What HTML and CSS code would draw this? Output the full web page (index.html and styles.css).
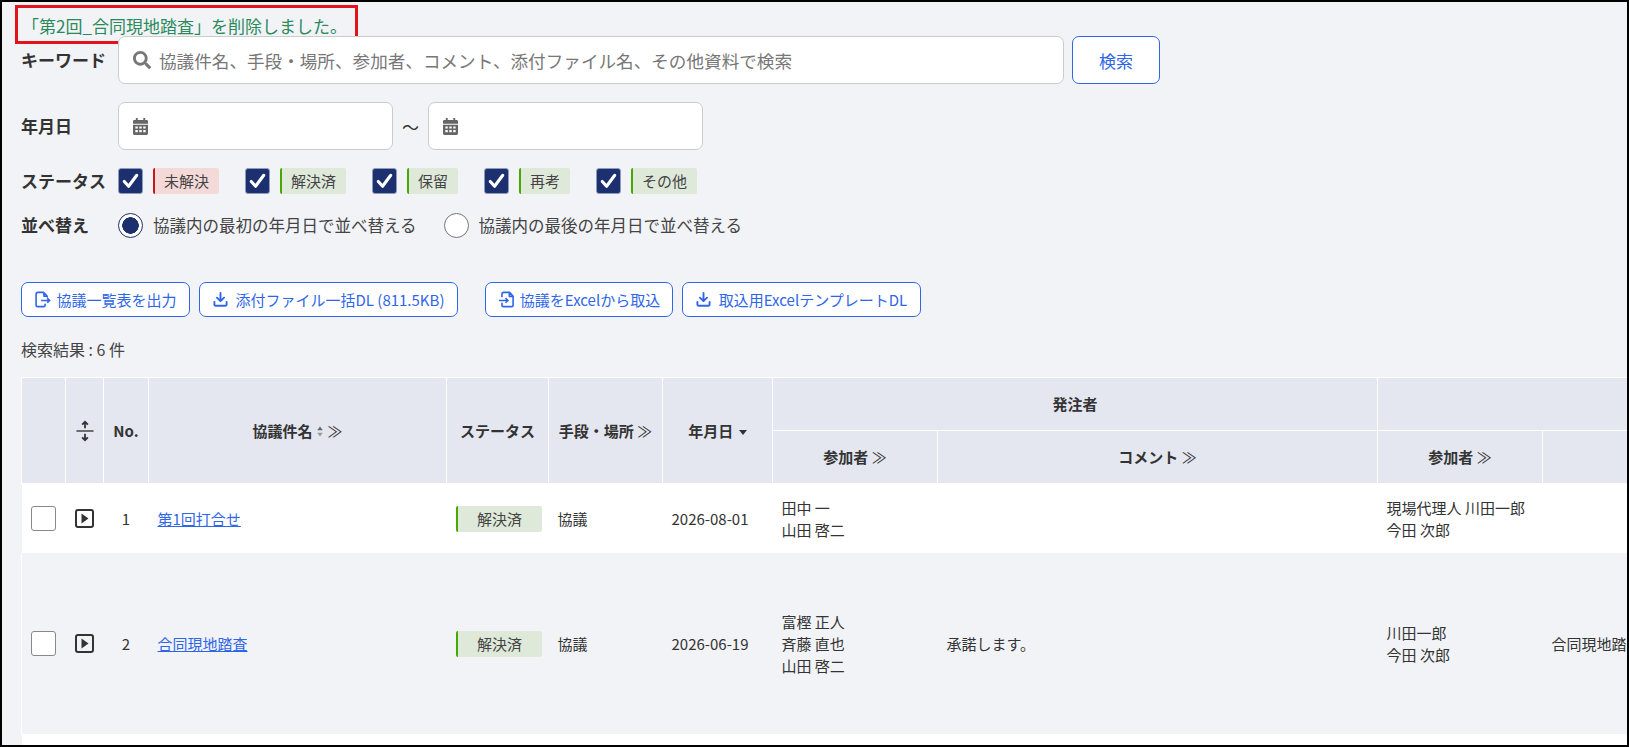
FILE: index.html
```html
<!DOCTYPE html>
<html lang="ja">
<head>
<meta charset="utf-8">
<title>協議一覧</title>
<link rel="stylesheet" href="styles.css">
</head>
<body>
<svg class="defs" width="0" height="0" aria-hidden="true">
  <symbol id="i-search" viewBox="0 0 512 512"><path d="M505 442.7L405.3 343c-4.5-4.5-10.6-7-17-7H372c27.6-35.3 44-79.7 44-128C416 93.1 322.9 0 208 0S0 93.1 0 208s93.1 208 208 208c48.3 0 92.7-16.4 128-44v16.3c0 6.4 2.5 12.5 7 17l99.7 99.7c9.4 9.4 24.6 9.4 33.9 0l28.3-28.3c9.4-9.4 9.4-24.6.1-34zM208 336c-70.7 0-128-57.2-128-128 0-70.7 57.2-128 128-128 70.7 0 128 57.2 128 128 0 70.7-57.2 128-128 128z" fill="currentColor"/></symbol>
  <symbol id="i-cal" viewBox="0 0 16 18"><path fill="currentColor" fill-rule="evenodd" d="M3 0h2v2h6V0h2v2h1.500A1.500 1.500 0 0 1 16 3.500V6H0V3.500A1.500 1.500 0 0 1 1.500 2H3zM0 7h16v9.500a1.500 1.500 0 0 1-1.500 1.500h-13A1.500 1.500 0 0 1 0 16.500zM2.500 9v2.200h2.600V9zm4.200 0v2.200h2.600V9zm4.200 0v2.200h2.600V9zM2.500 12.800V15h2.600v-2.200zm4.200 0V15h2.600v-2.200zm4.200 0V15h2.600v-2.200z"/></symbol>
  <symbol id="i-check" viewBox="0 0 24 24"><path d="M5.500 12.500l4.500 5L18.500 6" fill="none" stroke="#fff" stroke-width="3.200" stroke-linecap="round" stroke-linejoin="round"/></symbol>
  <symbol id="i-export" viewBox="0 0 18 18"><path d="M10.500 1.500H4a1.800 1.800 0 0 0-1.800 1.800v11.400A1.800 1.800 0 0 0 4 16.500h6a1.800 1.800 0 0 0 1.800-1.800v-1.200M10.500 1.500v4h3.500M10.500 1.500l3.500 4v1.500" fill="none" stroke="currentColor" stroke-width="1.700" stroke-linejoin="round"/><path d="M7.500 10h9M14 7.500l2.500 2.500-2.500 2.500" fill="none" stroke="currentColor" stroke-width="1.700"/></symbol>
  <symbol id="i-import" viewBox="0 0 18 18"><path d="M8 1.500h4.500l3.500 4v9.200a1.800 1.800 0 0 1-1.800 1.800H6a1.800 1.800 0 0 1-1.800-1.800v-2.200M4.200 6.500V3.300A1.800 1.800 0 0 1 6 1.500h2M12 1.500v4.200h4" fill="none" stroke="currentColor" stroke-width="1.700" stroke-linejoin="round"/><path d="M1 10h9.500M8 7.500l2.500 2.500L8 12.500" fill="none" stroke="currentColor" stroke-width="1.700"/></symbol>
  <symbol id="i-dl" viewBox="0 0 16 16"><path d="M8 1v8.500M4.200 6L8 9.800 11.800 6" fill="none" stroke="currentColor" stroke-width="2" stroke-linecap="round" stroke-linejoin="round"/><path d="M1.500 10.500v3a1.200 1.200 0 0 0 1.200 1.200h10.600a1.200 1.200 0 0 0 1.200-1.200v-3" fill="none" stroke="currentColor" stroke-width="2" stroke-linecap="round"/></symbol>
  <symbol id="i-expand" viewBox="0 0 20 24"><path d="M0.500 12h19" stroke="currentColor" stroke-width="1.500"/><path d="M10 9V2M6.800 5L10 1.800 13.200 5M10 15v7M6.800 19l3.200 3.200 3.200-3.200" fill="none" stroke="currentColor" stroke-width="2"/></symbol>
  <symbol id="i-play" viewBox="0 0 19 19"><rect x="1" y="1" width="17" height="17" rx="2" fill="none" stroke="currentColor" stroke-width="2"/><path d="M6.500 4.500l7 5-7 5z" fill="currentColor"/></symbol>
  <symbol id="i-sort" viewBox="0 0 8 14"><path d="M4 0.500L7.500 5.500h-7z" fill="#666"/><path d="M4 13.500L.5 8.500h7z" fill="#999"/></symbol>
  <symbol id="i-down" viewBox="0 0 10 6"><path d="M0 0h10L5 6z" fill="currentColor"/></symbol>
</svg>

<div class="frame">
  <div class="annotation"></div>
  <p class="message">「第2回_合同現地踏査」を削除しました。</p>

  <div class="row row-keyword">
    <span class="label">キーワード</span>
    <div class="field field-keyword">
      <svg class="ic-search"><use href="#i-search"/></svg>
      <span class="placeholder">協議件名、手段・場所、参加者、コメント、添付ファイル名、その他資料で検索</span>
    </div>
    <button class="btn-search">検索</button>
  </div>

  <div class="row row-date">
    <span class="label">年月日</span>
    <div class="field field-date"><svg class="ic-cal"><use href="#i-cal"/></svg></div>
    <span class="tilde">～</span>
    <div class="field field-date field-date2"><svg class="ic-cal"><use href="#i-cal"/></svg></div>
  </div>

  <div class="row row-status">
    <span class="label">ステータス</span>
    <div class="statuses">
      <span class="status"><span class="cb"><svg><use href="#i-check"/></svg></span><span class="tag tag-red">未解決</span></span>
      <span class="status"><span class="cb"><svg><use href="#i-check"/></svg></span><span class="tag">解決済</span></span>
      <span class="status"><span class="cb"><svg><use href="#i-check"/></svg></span><span class="tag">保留</span></span>
      <span class="status"><span class="cb"><svg><use href="#i-check"/></svg></span><span class="tag">再考</span></span>
      <span class="status"><span class="cb"><svg><use href="#i-check"/></svg></span><span class="tag">その他</span></span>
    </div>
  </div>

  <div class="row row-sort">
    <span class="label">並べ替え</span>
    <span class="radio radio-on"></span><span class="radio-label">協議内の最初の年月日で並べ替える</span>
    <span class="radio"></span><span class="radio-label">協議内の最後の年月日で並べ替える</span>
  </div>

  <div class="toolbar">
    <button class="btn btn-1"><svg class="ic-btn"><use href="#i-export"/></svg>協議一覧表を出力</button>
    <button class="btn btn-2"><svg class="ic-btn"><use href="#i-dl"/></svg>添付ファイル一括DL (811.5KB)</button>
    <button class="btn btn-3"><svg class="ic-btn"><use href="#i-import"/></svg>協議をExcelから取込</button>
    <button class="btn btn-4"><svg class="ic-btn"><use href="#i-dl"/></svg>取込用ExcelテンプレートDL</button>
  </div>

  <p class="result">検索結果 : 6 件</p>

  <table class="grid">
    <colgroup>
      <col class="c1"><col class="c2"><col class="c3"><col class="c4"><col class="c5"><col class="c6"><col class="c7"><col class="c8"><col class="c9"><col class="c10"><col class="c11">
    </colgroup>
    <thead>
      <tr>
        <th rowspan="2"></th>
        <th rowspan="2"><svg class="ic-expand"><use href="#i-expand"/></svg></th>
        <th rowspan="2">No.</th>
        <th rowspan="2">協議件名 <svg class="ic-sort"><use href="#i-sort"/></svg> <span class="more">≫</span></th>
        <th rowspan="2">ステータス</th>
        <th rowspan="2">手段・場所 <span class="more">≫</span></th>
        <th rowspan="2">年月日 <svg class="ic-down"><use href="#i-down"/></svg></th>
        <th colspan="2">発注者</th>
        <th colspan="2"></th>
      </tr>
      <tr>
        <th>参加者 <span class="more">≫</span></th>
        <th>コメント <span class="more">≫</span></th>
        <th>参加者 <span class="more">≫</span></th>
        <th></th>
      </tr>
    </thead>
    <tbody>
      <tr class="r1">
        <td class="ctr"><span class="box"></span></td>
        <td class="ctr"><svg class="ic-play"><use href="#i-play"/></svg></td>
        <td class="ctr">1</td>
        <td><a href="#">第1回打合せ</a></td>
        <td><span class="tag tag-cell">解決済</span></td>
        <td>協議</td>
        <td>2026-08-01</td>
        <td>田中 一<br>山田 啓二</td>
        <td></td>
        <td>現場代理人 川田一郎<br>今田 次郎</td>
        <td></td>
      </tr>
      <tr class="r2">
        <td class="ctr"><span class="box"></span></td>
        <td class="ctr"><svg class="ic-play"><use href="#i-play"/></svg></td>
        <td class="ctr">2</td>
        <td><a href="#">合同現地踏査</a></td>
        <td><span class="tag tag-cell">解決済</span></td>
        <td>協議</td>
        <td>2026-06-19</td>
        <td>富樫 正人<br>斉藤 直也<br>山田 啓二</td>
        <td>承諾します。</td>
        <td>川田一郎<br>今田 次郎</td>
        <td>合同現地踏査の資料を確認しました。</td>
      </tr>
      <tr class="r3"><td colspan="11"></td></tr>
    </tbody>
  </table>
</div>
</body>
</html>
```
FILE: styles.css
```css
* { box-sizing: border-box; }
html, body { margin: 0; height: 100%; }
body {
  font-family: "Noto Sans CJK JP", "Noto Sans", sans-serif;
  color: #333;
  background: #f2f3f7;
  overflow: hidden;
}
.defs { position: absolute; }
.frame {
  position: relative;
  height: 100vh;
  border: 2px solid #000;
  padding-left: 19px;
  overflow: hidden;
}
.annotation {
  position: absolute;
  left: 13px;
  top: 3px;
  width: 343px;
  height: 39px;
  border: 3px solid #e3131b;
  pointer-events: none;
}
.message {
  margin: 0;
  height: 34px;
  padding: 13px 0 0 1px;
  font-size: 17px;
  line-height: 21px;
  color: #2a8a5a;
}
.row { display: flex; align-items: center; }
.label { width: 97px; flex: none; font-size: 17px; font-weight: 700; line-height: 24px; color: #333; }
.field {
  position: relative;
  display: flex;
  align-items: center;
  height: 48px;
  background: #fff;
  border: 1px solid #ccc;
  border-radius: 7px;
}
.field-keyword { width: 946px; padding-left: 14px; }
.ic-search { width: 18px; height: 18px; color: #777; flex: none; }
.placeholder { margin-left: 8px; font-size: 17.6px; color: #777; white-space: nowrap; }
.btn-search {
  margin-left: 8px;
  width: 88px;
  height: 48px;
  background: #fff;
  border: 1px solid #2f66e8;
  border-radius: 7px;
  color: #2f66e8;
  font: inherit;
  font-size: 17px;
}
.row-date { margin-top: 18px; }
.field-date { width: 275px; padding-left: 14px; }
.field-date2 { width: 275px; }
.ic-cal { width: 15px; height: 17px; color: #666; }
.tilde { width: 35px; text-align: center; font-size: 17px; }
.row-status { margin-top: 18px; height: 26px; }
.statuses { display: flex; }
.status { display: flex; align-items: center; margin-right: 26px; }
.cb {
  display: block;
  width: 25px;
  height: 26px;
  background: #1c2f6e;
  border: 1px solid #8e9ac0;
  border-radius: 3px;
  margin-right: 10px;
}
.cb svg { display: block; width: 23px; height: 24px; }
.tag {
  display: inline-block;
  height: 26px;
  padding: 0 10px 0 9px;
  background: #dfe9da;
  border-left: 2px solid #46a800;
  border-radius: 2px;
  font-size: 15px;
  line-height: 26px;
  color: #444;
}
.tag-red { background: #f4d9d9; border-left-color: #c8161d; }
.row-sort { margin-top: 18px; height: 26px; }
.radio {
  flex: none;
  width: 25px;
  height: 25px;
  background: #fff;
  border: 1px solid #777;
  border-radius: 50%;
  margin-right: 10px;
}
.radio-on {
  border: 1px solid #1c2f6e;
  background: radial-gradient(circle, #1c2f6e 0 8px, #fff 8.5px);
}
.radio-label { font-size: 16.500px; color: #444; margin-right: 27px; white-space: nowrap; }
.toolbar { display: flex; margin-top: 44px; }
.btn {
  display: flex;
  align-items: center;
  justify-content: center;
  height: 35px;
  padding: 0;
  margin-right: 9px;
  background: #fff;
  border: 1px solid #2f66e8;
  border-radius: 7px;
  color: #2f66e8;
  font: inherit;
  font-size: 15px;
  white-space: nowrap;
}
.btn-1 { width: 169px; }
.btn-2 { width: 259px; margin-right: 27px; }
.btn-3 { width: 188px; }
.btn-4 { width: 239px; }
.ic-btn { width: 17px; height: 17px; margin-right: 5px; flex: none; }
.btn-2 .ic-btn, .btn-4 .ic-btn { width: 15px; height: 15px; margin-right: 8px; }
.result { margin: 20px 0 0; font-size: 16px; line-height: 24px; color: #444; }
.grid {
  margin-top: 16px;
  table-layout: fixed;
  width: 1820px;
  border-collapse: collapse;
  font-size: 15px;
  line-height: 22px;
  color: #333;
}
.c1 { width: 44px; } .c2 { width: 38px; } .c3 { width: 45px; } .c4 { width: 298px; }
.c5 { width: 102px; } .c6 { width: 114px; } .c7 { width: 110px; } .c8 { width: 165px; }
.c9 { width: 440px; } .c10 { width: 165px; } .c11 { width: 299px; }
.grid th {
  height: 53px;
  padding: 0;
  background: #e4e7f0;
  border: 1px solid #fff;
  font-size: 15px;
  font-weight: 700;
  text-align: center;
  white-space: nowrap;
}
.more { font-weight: 400; }
.ic-expand { display: block; width: 18px; height: 22px; margin: 0 auto; color: #333; }
.ic-sort { width: 8px; height: 11px; }
.ic-down { width: 8px; height: 5px; margin-left: 2px; vertical-align: middle; color: #333; }
.grid td { padding: 0 9px; vertical-align: middle; white-space: nowrap; overflow: hidden; }
.grid td.ctr { padding: 0; text-align: center; }
.r1 td { height: 70px; background: #fff; }
.r2 td { height: 180px; background: #f2f3f7; border-top: 1px solid #f2f3f7; }
.r2 td:first-child { border-left: 1px solid #fff; }
.r3 td { height: 40px; background: #fff; }
.box {
  display: block;
  width: 25px;
  height: 25px;
  margin: 0 auto;
  background: #fff;
  border: 1px solid #888;
  border-radius: 3px;
}
.ic-play { display: block; width: 19px; height: 19px; margin: 0 auto; color: #333; }
.grid a { color: #2f66e8; }
.tag-cell { width: 86px; text-align: center; padding: 0; display: block; }
```
